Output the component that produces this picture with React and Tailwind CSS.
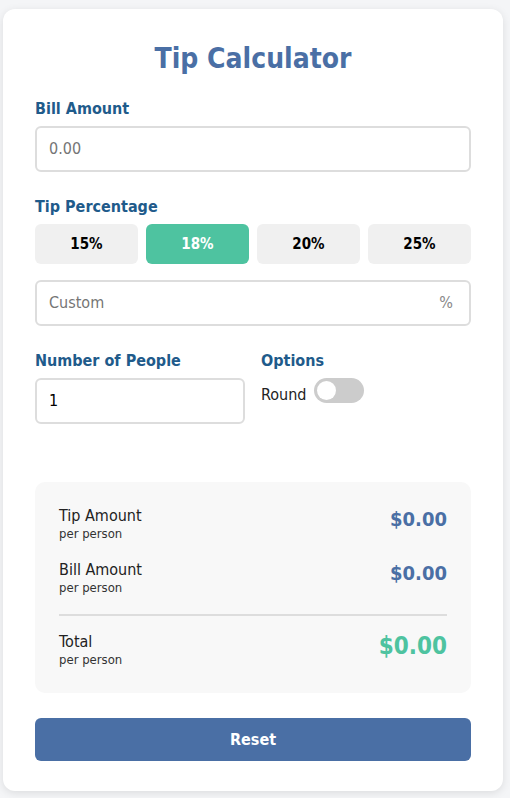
import React from "react";

function Label({ children }) {
  return (
    <div className="text-[16px] leading-[18px] font-bold text-[#1f5b8b] mb-2">{children}</div>
  );
}

function ResultRow({ title, value, big }) {
  return (
    <div className="flex items-start justify-between">
      <div>
        <div className="text-[16px] leading-[19px] text-[#222]">{title}</div>
        <div className="text-[13px] leading-[17px] text-[#333]">per person</div>
      </div>
      <div
        className={
          big
            ? "text-[24px] leading-[28px] font-bold text-[#4ec3a0]"
            : "text-[20px] leading-[24px] font-bold text-[#4a6fa5] mt-[1px]"
        }
      >
        {value}
      </div>
    </div>
  );
}

export default function App() {
  const tips = ["15%", "18%", "20%", "25%"];
  return (
    <div className="min-h-[798px] bg-[#f4f5f7] pt-[9px] pl-[3px] font-['DejaVu_Sans_Condensed','DejaVu_Sans',sans-serif]">
      <div className="w-[500px] h-[782px] bg-white rounded-[12px] shadow-[0_2px_8px_rgba(0,0,0,0.1)] px-8 pt-[33px]">
        <h1 className="text-[28px] leading-[34px] font-bold text-[#4a6fa5] text-center mb-6">
          Tip Calculator
        </h1>

        <div className="mb-[26px]">
          <Label>Bill Amount</Label>
          <div className="h-[46px] border-2 border-[#ddd] rounded-[6px] flex items-center px-3 text-[16px] text-[#757575]">
            0.00
          </div>
        </div>

        <div className="mb-[26px]">
          <Label>Tip Percentage</Label>
          <div className="grid grid-cols-4 gap-2 mb-4">
            {tips.map((t) => (
              <div
                key={t}
                className={
                  t === "18%"
                    ? "h-[40px] rounded-[6px] bg-[#4ec3a0] text-white text-[15px] font-bold flex items-center justify-center"
                    : "h-[40px] rounded-[6px] bg-[#f0f0f0] text-black text-[15px] font-bold flex items-center justify-center"
                }
              >
                {t}
              </div>
            ))}
          </div>
          <div className="h-[46px] border-2 border-[#ddd] rounded-[6px] flex items-center justify-between pl-3 pr-4 text-[16px] text-[#757575]">
            <span>Custom</span>
            <span className="text-[#888]">%</span>
          </div>
        </div>

        <div className="grid grid-cols-2 gap-4">
          <div>
            <Label>Number of People</Label>
            <div className="h-[46px] border-2 border-[#ddd] rounded-[6px] flex items-center px-3 text-[16px] text-black">
              1
            </div>
          </div>
          <div>
            <Label>Options</Label>
            <div className="flex items-end gap-2 h-[25px]">
              <span className="text-[16px] leading-[16px] text-[#222]">Round</span>
              <div className="w-[50px] h-[25px] rounded-full bg-[#ccc] flex items-center px-[3px]">
                <div className="w-[19px] h-[19px] rounded-full bg-white"></div>
              </div>
            </div>
          </div>
        </div>

        <div className="mt-[58px] bg-[#f8f8f8] rounded-[10px] px-6 pt-6 pb-[25px]">
          <ResultRow title="Tip Amount" value="$0.00" />
          <div className="h-[18px]"></div>
          <ResultRow title="Bill Amount" value="$0.00" />
          <div className="h-[2px] bg-[#ddd] mt-[18px] mb-[16px]"></div>
          <ResultRow title="Total" value="$0.00" big />
        </div>

        <div className="mt-[25px] h-[43px] rounded-[6px] bg-[#4a6fa5] text-white text-[16px] font-bold flex items-center justify-center">
          Reset
        </div>
      </div>
    </div>
  );
}
